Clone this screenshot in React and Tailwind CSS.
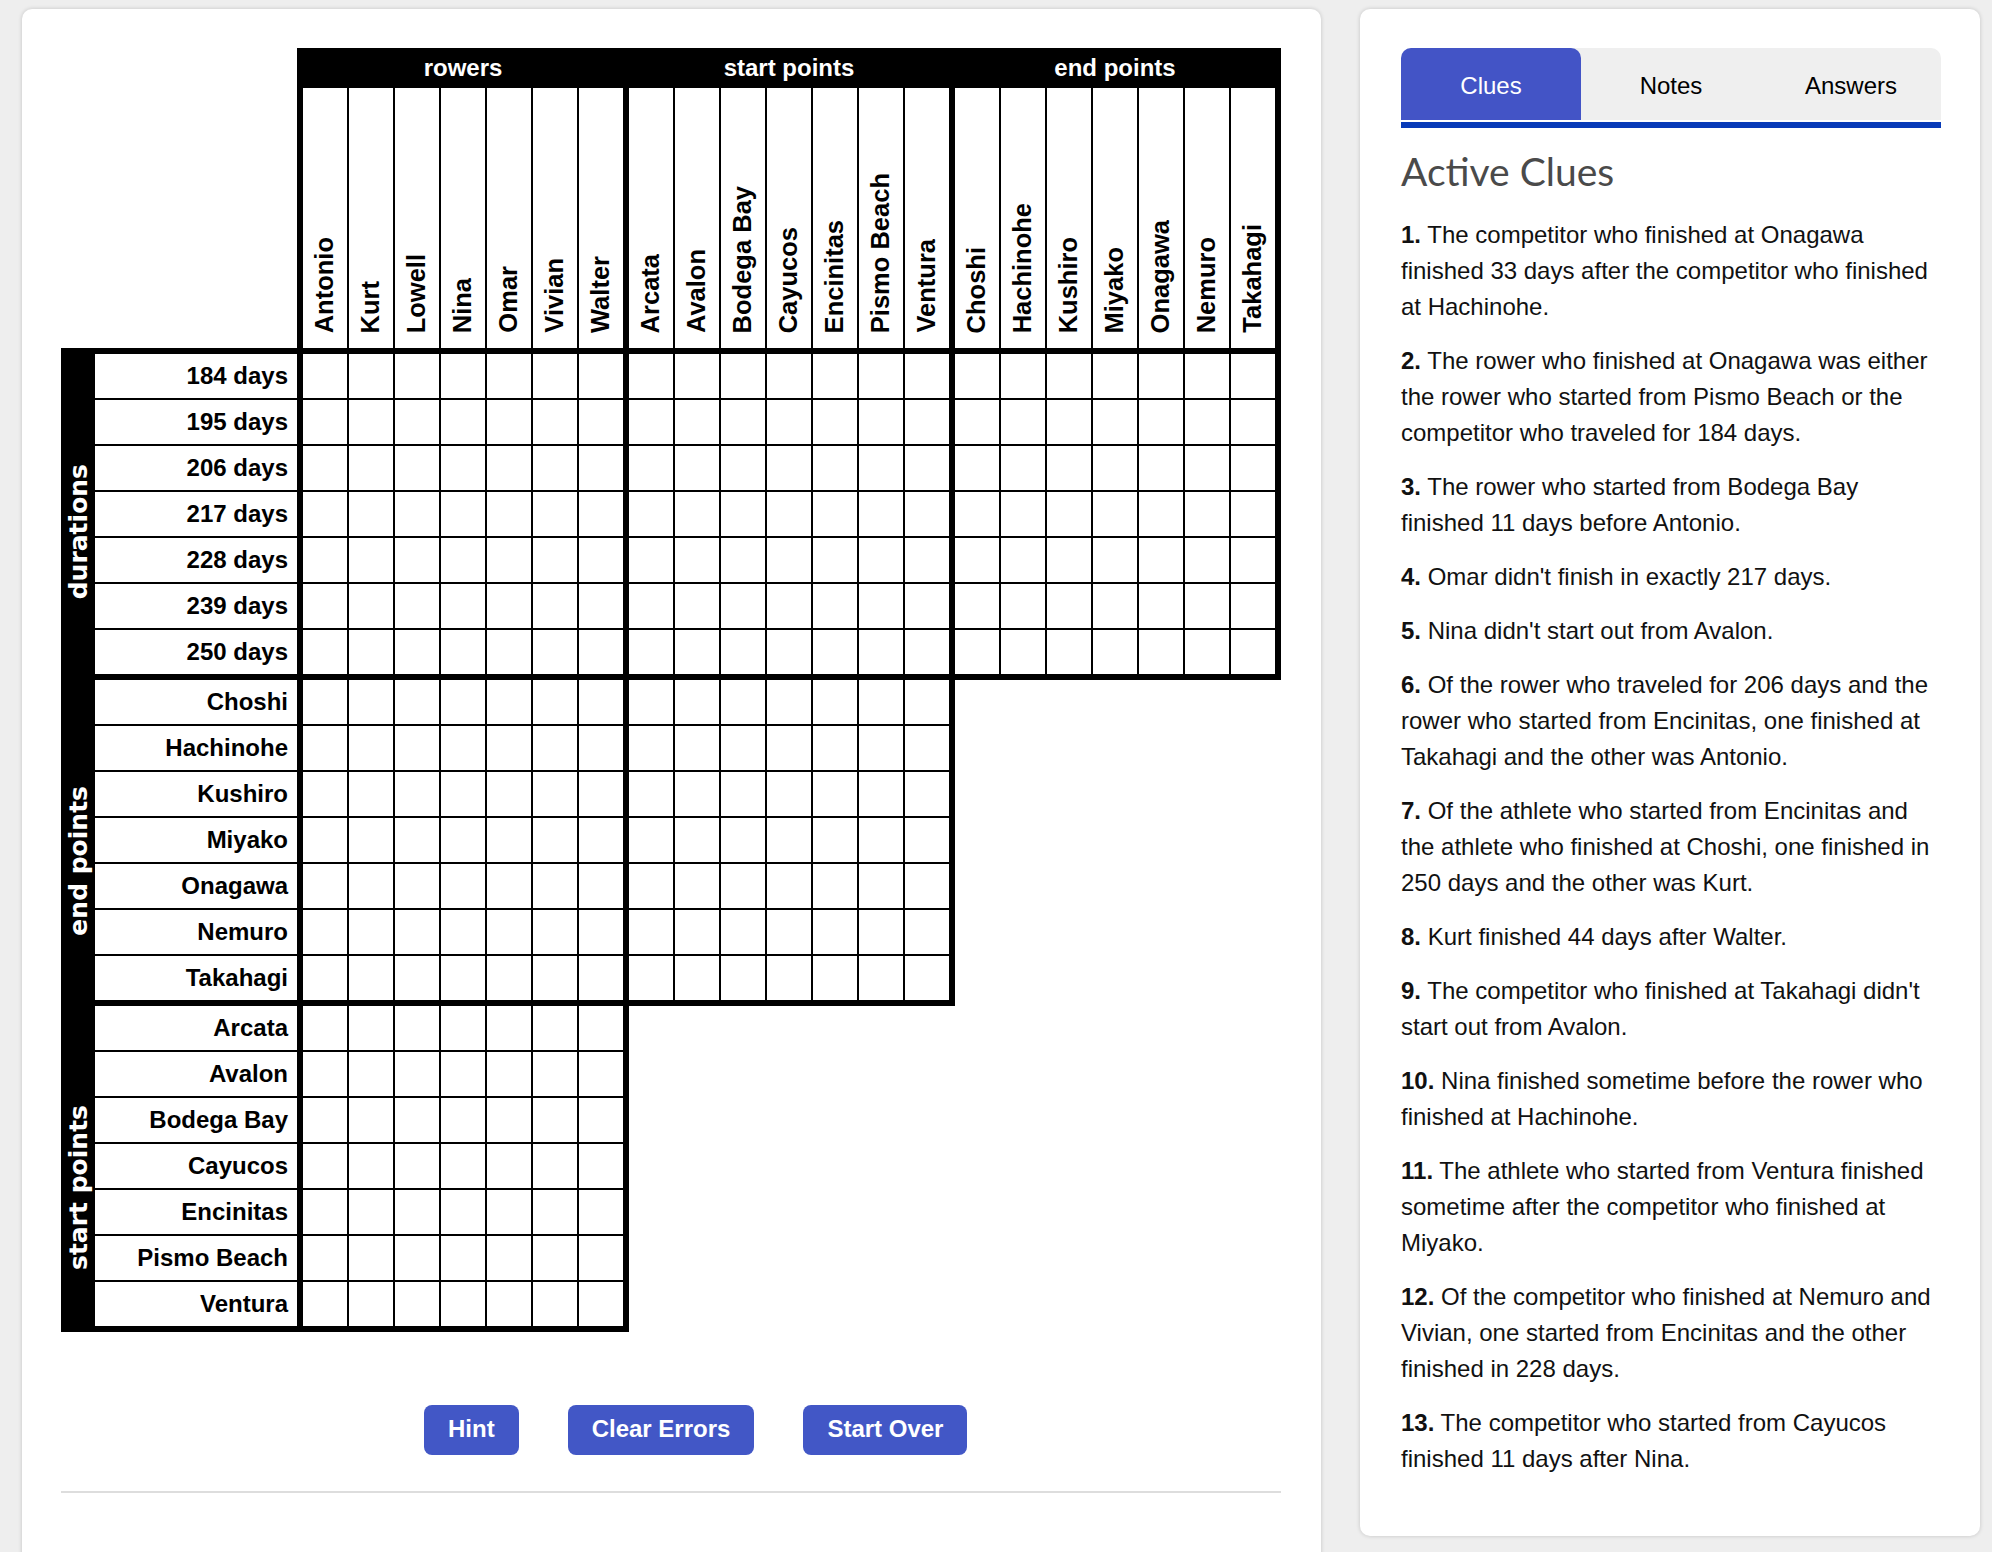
import React from "react";

const rowers = ["Antonio", "Kurt", "Lowell", "Nina", "Omar", "Vivian", "Walter"];
const starts = ["Arcata", "Avalon", "Bodega Bay", "Cayucos", "Encinitas", "Pismo Beach", "Ventura"];
const ends = ["Choshi", "Hachinohe", "Kushiro", "Miyako", "Onagawa", "Nemuro", "Takahagi"];
const durations = ["184 days", "195 days", "206 days", "217 days", "228 days", "239 days", "250 days"];
const cats = ["rowers", "start points", "end points"];

const clues = [
  "The competitor who finished at Onagawa finished 33 days after the competitor who finished at Hachinohe.",
  "The rower who finished at Onagawa was either the rower who started from Pismo Beach or the competitor who traveled for 184 days.",
  "The rower who started from Bodega Bay finished 11 days before Antonio.",
  "Omar didn't finish in exactly 217 days.",
  "Nina didn't start out from Avalon.",
  "Of the rower who traveled for 206 days and the rower who started from Encinitas, one finished at Takahagi and the other was Antonio.",
  "Of the athlete who started from Encinitas and the athlete who finished at Choshi, one finished in 250 days and the other was Kurt.",
  "Kurt finished 44 days after Walter.",
  "The competitor who finished at Takahagi didn't start out from Avalon.",
  "Nina finished sometime before the rower who finished at Hachinohe.",
  "The athlete who started from Ventura finished sometime after the competitor who finished at Miyako.",
  "Of the competitor who finished at Nemuro and Vivian, one started from Encinitas and the other finished in 228 days.",
  "The competitor who started from Cayucos finished 11 days after Nina.",
];

function Block() {
  return (
    <div className="grid grid-cols-[repeat(7,44px)] gap-[2px]">
      {Array.from({ length: 49 }).map((_, i) => (
        <div key={i} className="h-[44px] bg-white" />
      ))}
    </div>
  );
}

function Group({ label, items, blocks, first }) {
  return (
    <div className="flex">
      <div className="w-[34px] bg-black flex items-center justify-center pt-[36px]">
        <span className="[writing-mode:vertical-rl] rotate-180 text-white font-bold text-[25px] leading-none whitespace-nowrap font-['DejaVu_Sans',sans-serif]">
          {label}
        </span>
      </div>
      <div className={first ? "flex gap-[6px] bg-black pr-[6px] pb-[6px] pt-[6px]" : "flex gap-[6px] bg-black pr-[6px] pb-[6px]"}>
        <div className="w-[202px] flex flex-col gap-[2px]">
          {items.map((t) => (
            <div key={t} className="h-[44px] bg-white flex items-center justify-end pr-[9px] text-[24px] font-bold text-black">
              {t}
            </div>
          ))}
        </div>
        {Array.from({ length: blocks }).map((_, i) => (
          <Block key={i} />
        ))}
      </div>
    </div>
  );
}

export default function App() {
  return (
    <div className="w-[1992px] h-[1552px] overflow-hidden bg-[#eeeeee] flex items-start pt-[9px] pl-[22px] gap-[39px] font-['Liberation_Sans',Arial,sans-serif] text-black">
      {/* Left card */}
      <div className="w-[1299px] h-[1600px] shrink-0 bg-white rounded-[10px] shadow-[0_0_4px_rgba(0,0,0,0.18)] pt-[39px] pl-[39px]">
        {/* header */}
        <div className="flex">
          <div className="w-[236px]" />
          <div className="bg-black px-[6px] flex flex-col">
            <div className="h-[40px] flex gap-[6px]">
              {cats.map((c) => (
                <div key={c} className="w-[320px] flex items-center justify-center text-white font-bold text-[24px]">
                  {c}
                </div>
              ))}
            </div>
            <div className="flex gap-[6px]">
              {[rowers, starts, ends].map((g, gi) => (
                <div key={gi} className="flex gap-[2px]">
                  {g.map((n) => (
                    <div key={n} className="w-[44px] h-[260px] bg-white flex items-end justify-center pb-[15px]">
                      <span className="[writing-mode:vertical-rl] rotate-180 text-[25.5px] font-bold leading-none whitespace-nowrap">
                        {n}
                      </span>
                    </div>
                  ))}
                </div>
              ))}
            </div>
          </div>
        </div>
        {/* groups */}
        <div className="flex flex-col">
          <Group label="durations" items={durations} blocks={3} first />
          <Group label="end points" items={ends} blocks={2} />
          <Group label="start points" items={starts} blocks={1} />
        </div>
        {/* buttons */}
        <div className="flex mt-[73px] pl-[363px] gap-[49px]">
          <button className="h-[50px] px-[24px] rounded-[8px] bg-[#4257c6] text-white font-bold text-[24px] flex items-center pb-[2px]">Hint</button>
          <button className="h-[50px] px-[24px] rounded-[8px] bg-[#4257c6] text-white font-bold text-[24px] flex items-center pb-[2px]">Clear Errors</button>
          <button className="h-[50px] px-[24px] rounded-[8px] bg-[#4257c6] text-white font-bold text-[24px] flex items-center pb-[2px]">Start Over</button>
        </div>
        <div className="mt-[36px] h-[2px] w-[1220px] bg-[#dddddd]" />
      </div>

      {/* Right card */}
      <div className="w-[620px] h-[1527px] shrink-0 bg-white rounded-[10px] shadow-[0_0_4px_rgba(0,0,0,0.18)] pt-[39px] pl-[41px] pr-[39px]">
        <div className="flex h-[72px] bg-[#efefef] rounded-t-[10px]">
          <div className="flex-1 flex items-center justify-center bg-[#4354c6] text-white text-[24px] rounded-t-[10px] pt-[3px]">Clues</div>
          <div className="flex-1 flex items-center justify-center text-[24px] pt-[3px]">Notes</div>
          <div className="flex-1 flex items-center justify-center text-[24px] pt-[3px]">Answers</div>
        </div>
        <div className="mt-[2px] h-[6px] bg-[#083bb8]" />
        <h2 className="mt-[20px] text-[39px] leading-[47px] text-[#4a4a4a] font-normal font-['Lato','Open_Sans',sans-serif]">
          Active Clues
        </h2>
        <div className="mt-[22px] flex flex-col gap-[18px]">
          {clues.map((c, i) => (
            <p key={i} className="text-[24px] leading-[36px] text-[#111111]">
              <span className="font-bold">{i + 1}.</span> {c}
            </p>
          ))}
        </div>
      </div>
    </div>
  );
}
